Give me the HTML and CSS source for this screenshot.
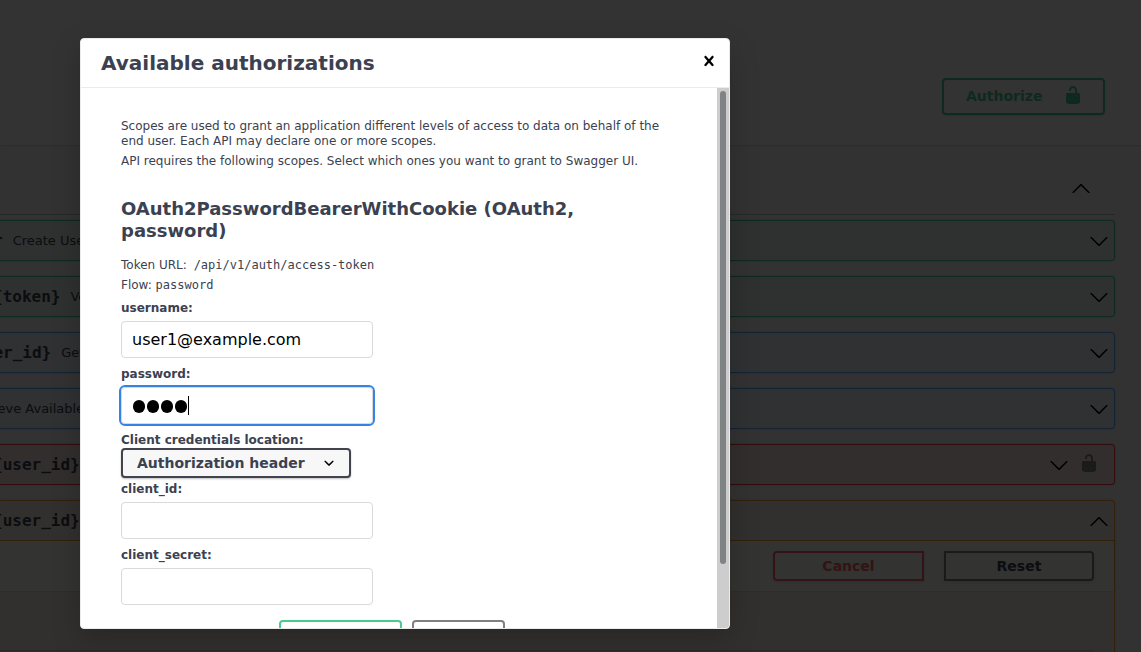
FILE: index.html
```
<!DOCTYPE html>
<html lang="en">
<head>
<meta charset="utf-8">
<title>Swagger UI</title>
<link rel="stylesheet" href="styles.css">
</head>
<body>
<svg class="sprite" width="0" height="0">
  <symbol id="unlocked" viewBox="0 0 20 20"><path d="M15.8 8H14V5.6C14 2.703 12.665 1 10 1 7.334 1 6 2.703 6 5.6V6h2v-.801C8 3.754 8.797 3 10 3c1.203 0 2 .754 2 2.199V8H4c-.553 0-1 .646-1 1.199V17c0 .549.428 1.139.951 1.307l1.197.387C5.672 18.861 6.55 19 7.1 19h5.8c.549 0 1.428-.139 1.951-.307l1.196-.387c.524-.167.953-.757.953-1.306V9.199C17 8.646 16.352 8 15.8 8z"/></symbol>
  <symbol id="arrow-up" viewBox="0 0 20 20"><path d="M17.418 14.908c.272.268.709.268.979 0s.271-.701 0-.969l-7.908-7.83c-.27-.268-.707-.268-.979 0l-7.908 7.83c-.27.268-.27.701 0 .969s.709.268.979 0L10 7.767z"/></symbol>
  <symbol id="arrow-down" viewBox="0 0 20 20"><path d="M17.418 6.109c.272-.268.709-.268.979 0s.271.701 0 .969l-7.908 7.83c-.27.268-.707.268-.979 0l-7.908-7.83c-.27-.268-.27-.701 0-.969s.709-.268.979 0L10 13.25z"/></symbol>
  <symbol id="close" viewBox="0 0 20 20"><path d="M14.348 14.849c-.469.469-1.229.469-1.697 0L10 11.819l-2.651 3.029c-.469.469-1.229.469-1.697 0-.469-.469-.469-1.229 0-1.697l2.758-3.15-2.759-3.152c-.469-.469-.469-1.228 0-1.697s1.228-.469 1.697 0L10 8.183l2.651-3.031c.469-.469 1.228-.469 1.697 0s.469 1.229 0 1.697l-2.758 3.152 2.758 3.15c.469.469.469 1.229 0 1.698z"/></symbol>
  <symbol id="select-arrow" viewBox="0 0 20 20"><path d="M13.418 7.859c.271-.268.709-.268.978 0 .27.268.272.701 0 .969l-3.908 3.83c-.27.268-.707.268-.979 0l-3.908-3.83c-.27-.267-.27-.701 0-.969.271-.268.709-.268.978 0L10 11l3.418-3.141z"/></symbol>
</svg>

<div class="page">
  <header class="schemes">
    <button class="btn authorize"><span>Authorize</span><svg class="icon"><use href="#unlocked"/></svg></button>
  </header>
  <main class="operations">
    <div class="tag"><svg class="icon"><use href="#arrow-up"/></svg></div>
    <div class="opblock post"><div class="summary">
      <span class="path lead-r">r</span><span class="desc">Create User</span><svg class="icon"><use href="#arrow-down"/></svg></div></div>
    <div class="opblock post"><div class="summary">
      <span class="path lead-brace">{token}</span><span class="desc">Verify</span><svg class="icon"><use href="#arrow-down"/></svg></div></div>
    <div class="opblock get"><div class="summary">
      <span class="path lead-id">{user_id}</span><span class="desc">Get User</span><svg class="icon"><use href="#arrow-down"/></svg></div></div>
    <div class="opblock get"><div class="summary">
      <span class="desc lead-desc">Retrieve Available</span><svg class="icon"><use href="#arrow-down"/></svg></div></div>
    <div class="opblock delete"><div class="summary">
      <span class="path lead-brace">{user_id}</span><svg class="icon"><use href="#arrow-down"/></svg><svg class="icon lock"><use href="#unlocked"/></svg></div></div>
    <div class="opblock put open"><div class="summary">
      <span class="path lead-brace">{user_id}</span><svg class="icon"><use href="#arrow-up"/></svg></div>
      <div class="section-head">
        <button class="btn cancel">Cancel</button>
        <button class="btn reset">Reset</button>
      </div>
      <div class="params"></div>
    </div>
  </main>
</div>

<div class="backdrop"></div>
<section class="modal">
  <header class="modal-head"><h3>Available authorizations</h3><svg class="icon close"><use href="#close"/></svg></header>
  <div class="modal-main">
    <div class="content">
      <p>Scopes are used to grant an application different levels of access to data on behalf of the end user. Each API may declare one or more scopes.</p>
      <p>API requires the following scopes. Select which ones you want to grant to Swagger UI.</p>
      <h4>OAuth2PasswordBearerWithCookie (OAuth2, password)</h4>
      <p class="url">Token URL: <code>/api/v1/auth/access-token</code></p>
      <p class="flow">Flow: <code>password</code></p>
      <div class="field"><label>username:</label><div class="input">user1@example.com</div></div>
      <div class="field"><label>password:</label><div class="input focused"><i class="dot"></i><i class="dot"></i><i class="dot"></i><i class="dot"></i><i class="caret"></i></div></div>
      <div class="field location"><label>Client credentials location:</label><div class="select"><span>Authorization header</span><svg class="icon"><use href="#select-arrow"/></svg></div></div>
      <div class="field"><label>client_id:</label><div class="input"></div></div>
      <div class="field"><label>client_secret:</label><div class="input"></div></div>
      <div class="actions"><div class="action go"></div><div class="action done"></div></div>
    </div>
    <div class="scrollbar"><div class="thumb"></div></div>
  </div>
</section>
</body>
</html>
```
FILE: styles.css
```
* { box-sizing: border-box; }
body {
  margin: 0; width: 1141px; height: 652px; overflow: hidden; position: relative;
  background: #fafafa; color: #3b4151; font-family: "DejaVu Sans", sans-serif;
}
.sprite { position: absolute; }
.icon { width: 20px; height: 20px; flex: none; display: block; fill: #000; }
.page { height: 652px; overflow: hidden; }

.schemes {
  height: 145px; padding: 78px 36px 0 0; display: flex; justify-content: flex-end; align-items: flex-start;
  background: #fff; box-shadow: 0 1px 2px rgba(0,0,0,.15);
}
.btn {
  font: bold 14px "DejaVu Sans", sans-serif; color: #3b4151; background: transparent;
  border: 2px solid gray; border-radius: 4px; box-shadow: 0 1px 2px rgba(0,0,0,.1); padding: 0;
}
.authorize {
  width: 163px; height: 37px; padding: 0 20px 2px 22px; display: flex; align-items: center;
  justify-content: space-between; color: #49cc90; border-color: #49cc90;
}
.authorize .icon { fill: #49cc90; margin-top: -1px; }

.operations { padding-right: 26px; }
.tag {
  height: 70px; margin-bottom: 5px; padding: 33px 24px 0 0; display: flex; justify-content: flex-end;
  border-bottom: 1px solid rgba(59,65,81,.3);
}
.opblock {
  height: 41px; margin-bottom: 15px; border: 1px solid; border-left: 0;
  border-radius: 0 4px 4px 0; box-shadow: 0 0 3px rgba(0,0,0,.19);
}
.post { border-color: #49cc90; background: rgba(73,204,144,.1); }
.get { border-color: #61affe; background: rgba(97,175,254,.1); }
.delete { border-color: #f93e3e; background: rgba(249,62,62,.1); }
.put { border-color: #fca130; background: rgba(252,161,48,.1); }
.summary { height: 39px; padding-right: 5px; display: flex; align-items: center; white-space: nowrap; }
.summary .icon { margin: 1px 0 0 auto; }
.summary .icon.lock { margin: -3px 10px 0; fill: #888; }
.path { font: bold 16px "DejaVu Sans Mono", monospace; }
.desc { font-size: 13px; margin-left: 10px; }
.lead-r { margin-left: -7px; }
.lead-brace { margin-left: -7px; }
.lead-id { margin-left: -35.5px; }
.lead-desc { margin-left: -33px; }
.open { height: 200px; }
.open .summary { height: 40px; border-bottom: 1px solid #fca130; }
.section-head {
  height: 50px; padding: 0 20px; display: flex; gap: 20px; justify-content: flex-end; align-items: center;
  background: rgba(255,255,255,.8); box-shadow: 0 1px 2px rgba(0,0,0,.1);
}
.section-head .btn { width: 150px; height: 30px; }
.section-head .cancel { width: 151px; color: #ff6060; border-color: #ff6060; border-radius: 4px 0 0 4px; }
.section-head .reset { border-radius: 0 4px 4px 0; }
.params { height: 60px; margin-right: 20px; border-bottom: 1px solid rgba(59,65,81,.2); }

.backdrop { position: absolute; inset: 0; background: rgba(0,0,0,.8); }
.modal {
  position: absolute; left: 80px; top: 38px; width: 650px; height: 591px; overflow: hidden;
  display: flex; flex-direction: column; background: #fff;
  border: 1px solid #ebebeb; border-radius: 4px; box-shadow: 0 10px 30px rgba(0,0,0,.2);
}
.modal-head {
  height: 49px; flex: none; padding: 0 10px 0 20px; display: flex; align-items: center;
  justify-content: space-between; border-bottom: 1px solid #ebebeb;
}
.modal-head h3 { margin: 0; font-size: 20px; line-height: 24px; }
.modal-head .close { margin-top: -5px; }
.modal-main { flex: 1; min-height: 0; display: flex; }
.content { flex: 1; overflow: hidden; padding: 31px 40px 0; font-size: 12px; line-height: 15px; }
.content p { margin: 0 0 5px; }
.content h4 { margin: 29px 0 16px; font-size: 18px; line-height: 22px; }
.content code { font: 12px/15px "DejaVu Sans Mono", monospace; }
.content .url code { margin-left: 3px; }
.content .flow { margin-bottom: 8px; }
.field { height: 66px; }
.field label { display: block; height: 20px; font-weight: bold; }
.location { height: 49px; }
.location label { height: 15px; }
.input {
  width: 252px; height: 37px; padding: 0 10px; display: flex; align-items: center;
  border: 1px solid #d9d9d9; border-radius: 4px; background: #fff; color: #000; font-size: 16px;
}
.focused { outline: 2px solid #3584e4; outline-offset: 0; }
.dot { width: 12.6px; height: 12.6px; margin: 2px .7px 0; border-radius: 50%; background: #000; }
.caret { width: 1px; height: 19px; background: #000; }
.select {
  width: 230px; height: 30px; padding: 0 10px 0 14px; display: flex; align-items: center;
  justify-content: space-between; font-size: 14px; font-weight: bold; background: #f7f7f7;
  border: 2px solid #41444e; border-radius: 4px; box-shadow: 0 1px 2px rgba(0,0,0,.25);
}
.actions { display: flex; gap: 10px; justify-content: center; margin: 6px 14px 0 0; }
.action { height: 37px; flex: none; border: 2px solid gray; border-radius: 4px; }
.go { width: 123px; border-color: #49cc90; }
.done { width: 93px; }
.scrollbar { width: 12px; padding: 3px; background: #cdcdcd; }
.thumb { height: 473px; border-radius: 3px; background: #7f8383; }
```
